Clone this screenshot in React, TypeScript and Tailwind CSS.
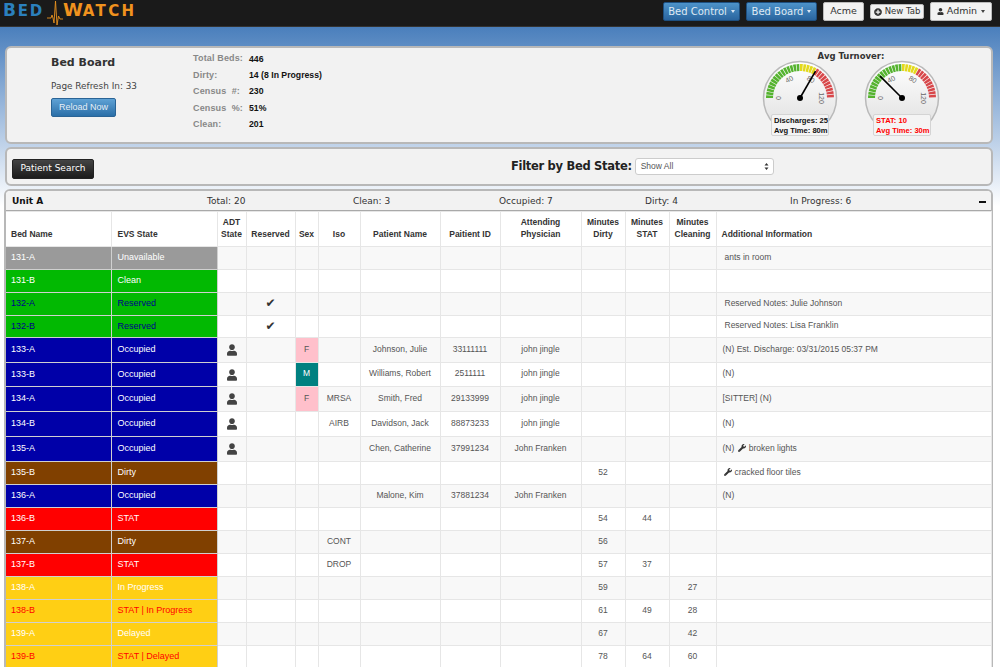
import React from "react";
import { FaUser, FaPlusCircle, FaWrench } from "react-icons/fa";

type Row = {
    bed: string;
    evs: string;
    color: string;
    text: string;
    h: string;
    adt?: boolean;
    reserved?: boolean;
    sex?: string;
    iso?: string;
    name?: string;
    pid?: string;
    doctor?: string;
    dirty?: string;
    stat?: string;
    cleaning?: string;
    info?: string;
    wrench?: boolean;
    infoPad?: string;
};

const rows: Row[] = [
    { bed: "131-A", evs: "Unavailable", color: "bg-[#9a9a9a]", text: "text-white", h: "h-[23px]", info: "ants in room", infoPad: "pl-[8px]" },
    { bed: "131-B", evs: "Clean", color: "bg-[#02b902]", text: "text-white", h: "h-[23px]" },
    { bed: "132-A", evs: "Reserved", color: "bg-[#02b902]", text: "text-[#00008b]", h: "h-[23px]", reserved: true, info: "Reserved Notes: Julie Johnson", infoPad: "pl-[8px]" },
    { bed: "132-B", evs: "Reserved", color: "bg-[#02b902]", text: "text-[#00008b]", h: "h-[22px]", reserved: true, info: "Reserved Notes: Lisa Franklin", infoPad: "pl-[8px]" },
    { bed: "133-A", evs: "Occupied", color: "bg-[#0000a8]", text: "text-white", h: "h-[25px]", adt: true, sex: "F", name: "Johnson, Julie", pid: "33111111", doctor: "john jingle", info: "(N) Est. Discharge: 03/31/2015 05:37 PM" },
    { bed: "133-B", evs: "Occupied", color: "bg-[#0000a8]", text: "text-white", h: "h-[24px]", adt: true, sex: "M", name: "Williams, Robert", pid: "2511111", doctor: "john jingle", info: "(N)" },
    { bed: "134-A", evs: "Occupied", color: "bg-[#0000a8]", text: "text-white", h: "h-[25px]", adt: true, sex: "F", iso: "MRSA", name: "Smith, Fred", pid: "29133999", doctor: "john jingle", info: "[SITTER] (N)" },
    { bed: "134-B", evs: "Occupied", color: "bg-[#0000a8]", text: "text-white", h: "h-[25px]", adt: true, iso: "AIRB", name: "Davidson, Jack", pid: "88873233", doctor: "john jingle", info: "(N)" },
    { bed: "135-A", evs: "Occupied", color: "bg-[#0000a8]", text: "text-white", h: "h-[25px]", adt: true, name: "Chen, Catherine", pid: "37991234", doctor: "John Franken", info: "(N)", wrench: true },
    { bed: "135-B", evs: "Dirty", color: "bg-[#804000]", text: "text-white", h: "h-[23px]", dirty: "52", wrench: true, info: "cracked floor tiles" },
    { bed: "136-A", evs: "Occupied", color: "bg-[#0000a8]", text: "text-white", h: "h-[23px]", name: "Malone, Kim", pid: "37881234", doctor: "John Franken", info: "(N)" },
    { bed: "136-B", evs: "STAT", color: "bg-[#ff0000]", text: "text-white", h: "h-[23px]", dirty: "54", stat: "44" },
    { bed: "137-A", evs: "Dirty", color: "bg-[#804000]", text: "text-white", h: "h-[23px]", iso: "CONT", dirty: "56" },
    { bed: "137-B", evs: "STAT", color: "bg-[#ff0000]", text: "text-white", h: "h-[23px]", iso: "DROP", dirty: "57", stat: "37" },
    { bed: "138-A", evs: "In Progress", color: "bg-[#ffcf14]", text: "text-white", h: "h-[23px]", dirty: "59", cleaning: "27" },
    { bed: "138-B", evs: "STAT | In Progress", color: "bg-[#ffcf14]", text: "text-[#ff0000]", h: "h-[23px]", dirty: "61", stat: "49", cleaning: "28" },
    { bed: "139-A", evs: "Delayed", color: "bg-[#ffcf14]", text: "text-white", h: "h-[23px]", dirty: "67", cleaning: "42" },
    { bed: "139-B", evs: "STAT | Delayed", color: "bg-[#ffcf14]", text: "text-[#ff0000]", h: "h-[23px]", dirty: "78", stat: "64", cleaning: "60" },
];

const stats = [
    ["Total Beds:", "446"],
    ["Dirty:", "14 (8 In Progress)"],
    ["Census  #:", "230"],
    ["Census  %:", "51%"],
    ["Clean:", "201"],
];

const Caret = ({ white }: { white?: boolean }) => (
    <span className={`inline-block ml-[4px] align-middle w-0 h-0 border-x-[2.5px] border-x-transparent border-t-[3px] ${white ? "border-t-[#dbe7f3]" : "border-t-[#444]"}`} />
);

const NavBlue = ({ label, width }: { label: string; width: string }) => (
    <div className={`${width} h-[19px] flex items-center justify-center rounded-[2px] text-[10px] text-[#dfe9f3] bg-gradient-to-b from-[#4d93c9] to-[#2a659f] border border-[#1d4f80] font-['DejaVu_Sans',sans-serif]`}>
        {label}
        <Caret white />
    </div>
);

// value goes 0..120 over the half circle
const Gauge = ({ id, value, lines, red }: { id: string; value: number; lines: string[]; red?: boolean }) => {
    const cx = 42;
    const cy = 40;
    const ticks = [];
    for (let i = 0; i < 30; i++) {
        const a0 = Math.PI - (i / 30) * Math.PI;
        const a1 = Math.PI - ((i + 0.8) / 30) * Math.PI;
        const color = i < 15 ? "#55b32f" : i < 20 ? "#e3d91c" : "#d8474a";
        const p = (r: number, a: number) => `${cx + r * Math.cos(a)} ${cy - r * Math.sin(a)}`;
        ticks.push(
            <path key={i} fill={color} d={`M${p(27, a0)} L${p(34, a0)} L${p(34, a1)} L${p(27, a1)} Z`} />
        );
    }
    const needle = Math.PI - (value / 120) * Math.PI;
    return (
        <div className="relative w-[84px] h-[80px]">
            <svg width="84" height="80" viewBox="0 0 84 80">
                <defs>
                    <linearGradient id={id} x1="0" y1="0" x2="0" y2="1">
                        <stop offset="0" stopColor="#ffffff" />
                        <stop offset="1" stopColor="#dedede" />
                    </linearGradient>
                </defs>
                <circle cx={cx} cy={cy} r="36.5" fill={`url(#${id})`} stroke="#b9b9b9" strokeWidth="1.5" />
                {ticks}
                {[0, 40, 80, 120].map((v) => (
                    <text
                        key={v}
                        x={cx}
                        y={cy - 21}
                        fontSize="7"
                        fill="#666"
                        textAnchor="middle"
                        dominantBaseline="middle"
                        fontFamily="'Liberation Sans', sans-serif"
                        transform={`rotate(${-90 + v * 1.5} ${cx} ${cy})`}
                    >
                        {v}
                    </text>
                ))}
                <line
                    x1={cx}
                    y1={cy}
                    x2={cx + 31 * Math.cos(needle)}
                    y2={cy - 31 * Math.sin(needle)}
                    stroke="#000"
                    strokeWidth="1.6"
                />
                <circle cx={cx} cy={cy} r="3" fill="#000" />
            </svg>
            <div className={`absolute left-[13px] top-[56px] w-[58px] h-[22px] pl-[2px] pt-[1px] flex flex-col justify-center rounded-[2px] border border-[#d4d4d4] bg-[#f4f4f4] text-[7.6px] leading-[9.5px] font-bold whitespace-nowrap ${red ? "text-[#ff0000]" : "text-[#111]"}`}>
                {lines.map((l) => (
                    <div key={l}>{l}</div>
                ))}
            </div>
        </div>
    );
};

const th = "border border-[#e6e6e6] px-[1px] pb-[6px] align-bottom text-center font-bold text-[8.5px] leading-[12px] text-[#333]";

const App = () => {
    return (
        <div className="h-[667px] overflow-hidden bg-white font-['Liberation_Sans',sans-serif]">
            <div className="h-[27px] bg-[#1a1a1a] border-b border-[#333] flex items-start pr-[8px]">
                <div className="flex items-center h-[20px] pl-[3px] font-['DejaVu_Sans',sans-serif] font-bold leading-[20px]">
                    <span className="text-[#2b80bd] text-[15px] tracking-[1.8px] w-[44px] whitespace-nowrap">
                        <span className="text-[17px]">B</span>ED
                    </span>
                    <svg width="16" height="26" viewBox="0 0 16 26" className="self-start">
                        <path d="M0 18 H4 L5 15 L6 18 L7 23 L8.5 1 L10 25 L11.5 16 L13 19 H16" fill="none" stroke="#e8921f" strokeWidth="0.9" />
                    </svg>
                    <span className="text-[#f0921e] text-[15px] tracking-[2.3px] whitespace-nowrap">
                        <span className="text-[18px] tracking-[0px]">W</span>ATCH
                    </span>
                </div>
                <div className="ml-auto flex items-center gap-[6px] pt-[2px] font-['DejaVu_Sans',sans-serif]">
                    <NavBlue label="Bed Control" width="w-[77px]" />
                    <NavBlue label="Bed Board" width="w-[71px]" />
                    <div className="w-[41px] h-[19px] flex items-center justify-center rounded-[2px] bg-[#f2f2f2] border border-[#bbb] text-[9.5px] text-[#333]">Acme</div>
                    <div className="w-[54px] h-[15px] flex items-center justify-center gap-[3px] rounded-[2px] bg-[#f2f2f2] border border-[#bbb] text-[8.5px] text-[#333]">
                        <FaPlusCircle className="w-[8px] h-[8px]" />
                        New Tab
                    </div>
                    <div className="w-[62px] h-[19px] flex items-center justify-center rounded-[2px] bg-[#f2f2f2] border border-[#bbb] text-[9.5px] text-[#333]">
                        <FaUser className="w-[7px] h-[7px] mr-[3px]" />
                        Admin
                        <Caret />
                    </div>
                </div>
            </div>

            <div className="h-[640px] pt-[19px] pl-[5px] pr-[7px] bg-gradient-to-b from-[#4a7fbc] to-white to-[28%]">
                <div className="h-[98px] flex rounded-[6px] border-2 border-[#b8b8b8] bg-[#f2f2f2] pl-[44px]">
                    <div className="w-[142px] pt-[8px] font-['DejaVu_Sans',sans-serif]">
                        <div className="text-[11px] font-bold text-[#333] leading-[14px]">Bed Board</div>
                        <div className="mt-[11px] text-[8.9px] leading-[11px] text-[#444] whitespace-nowrap">Page Refresh In: 33</div>
                        <div className="mt-[6px] w-[65px] h-[19px] flex items-center justify-center rounded-[2px] border border-[#2a6496] bg-gradient-to-b from-[#5fa2d5] to-[#2a6fa8] text-[9px] text-[#e6eef6] font-['Liberation_Sans',sans-serif]">
                            Reload Now
                        </div>
                    </div>
                    <div className="pt-[3px] flex flex-col">
                        {stats.map(([k, v]) => (
                            <div key={k} className="flex h-[16.4px] items-center text-[9px] font-bold">
                                <span className="w-[56px] text-[#888] whitespace-pre tracking-[0.15px]">{k}</span>
                                <span className="text-[8.7px] text-[#111] whitespace-nowrap">{v}</span>
                            </div>
                        ))}
                    </div>
                    <div className="ml-auto mr-[47px] pt-[3px] flex flex-col items-center">
                        <div className="h-[11px] text-[8.5px] leading-[11px] font-bold text-[#333] font-['DejaVu_Sans',sans-serif]">Avg Turnover:</div>
                        <div className="flex gap-[18px] -mt-[4px]">
                            <Gauge id="g1" value={80} lines={["Discharges: 25", "Avg Time: 80m"]} />
                            <Gauge id="g2" value={30} lines={["STAT: 10", "Avg Time: 30m"]} red />
                        </div>
                    </div>
                </div>

                <div className="mt-[3px] h-[39px] flex items-center rounded-[6px] border-2 border-[#b8b8b8] bg-[#f2f2f2] pl-[5px]">
                    <div className="mt-[5px] w-[82px] h-[20px] flex items-center justify-center rounded-[2px] bg-gradient-to-b from-[#444] to-[#1c1c1c] border border-[#222] text-white text-[9px] font-['DejaVu_Sans',sans-serif]">
                        Patient Search
                    </div>
                    <div className="ml-[417px] text-[11.5px] font-bold text-[#222] whitespace-nowrap font-['DejaVu_Sans',sans-serif] tracking-[-0.3px]">Filter by Bed State:</div>
                    <div className="ml-[3px] w-[139px] h-[17px] flex items-center justify-between rounded-[3px] border border-[#ccc] bg-white pl-[5px] pr-[4px] text-[8.5px] text-[#555]">
                        Show All
                        <svg width="5" height="9" viewBox="0 0 5 9">
                            <path d="M0.5 3.5 L2.5 1 L4.5 3.5 Z M0.5 5.5 L2.5 8 L4.5 5.5 Z" fill="#333" />
                        </svg>
                    </div>
                </div>

                <div className="mt-[3px] -ml-[1px] rounded-t-[6px] border-2 border-b-0 border-[#b8b8b8] bg-white">
                    <div className="h-[20px] pt-[2px] flex items-center bg-[#f2f2f2] border-b border-[#a9a9a9] rounded-t-[4px] pl-[6px] font-['DejaVu_Sans',sans-serif] text-[9px] text-[#333]">
                        <div className="w-[195px] text-[9px] font-bold text-[#111]">Unit A</div>
                        <div className="w-[146px]">Total: 20</div>
                        <div className="w-[146px]">Clean: 3</div>
                        <div className="w-[146px]">Occupied: 7</div>
                        <div className="w-[145px]">Dirty: 4</div>
                        <div className="w-[62px] whitespace-nowrap">In Progress: 6</div>
                        <div className="ml-[127px] w-[7px] h-[2px] bg-[#111]" />
                    </div>
                    <table className="w-[985px] table-fixed border-collapse text-[8.5px] text-[#555]">
                        <colgroup>
                            <col className="w-[105px]" />
                            <col className="w-[106px]" />
                            <col className="w-[29px]" />
                            <col className="w-[49px]" />
                            <col className="w-[23px]" />
                            <col className="w-[42px]" />
                            <col className="w-[80px]" />
                            <col className="w-[60px]" />
                            <col className="w-[81px]" />
                            <col className="w-[44px]" />
                            <col className="w-[44px]" />
                            <col className="w-[47px]" />
                            <col className="w-[275px]" />
                        </colgroup>
                        <thead>
                            <tr className="h-[35px]">
                                <th className={`${th} text-left pl-[5px] border-l-0`}>Bed Name</th>
                                <th className={`${th} text-left pl-[6px]`}>EVS State</th>
                                <th className={th}>ADT<br />State</th>
                                <th className={th}>Reserved</th>
                                <th className={th}>Sex</th>
                                <th className={th}>Iso</th>
                                <th className={th}>Patient Name</th>
                                <th className={th}>Paitient ID</th>
                                <th className={th}>Attending<br />Physician</th>
                                <th className={th}>Minutes<br />Dirty</th>
                                <th className={th}>Minutes<br />STAT</th>
                                <th className={th}>Minutes<br />Cleaning</th>
                                <th className={`${th} text-left pl-[5px]`}>Additional Information</th>
                            </tr>
                        </thead>
                        <tbody>
                            {rows.map((r, i) => {
                                const bg = i % 2 === 0 ? "bg-[#f8f8f8]" : "bg-white";
                                const td = `border border-[#e6e6e6] text-center px-0 pt-0 pb-[2px] ${bg}`;
                                return (
                                    <tr key={r.bed} className={r.h}>
                                        <td className={`${r.color} ${r.text} border border-[#d0d0d0] border-l-0 pl-[5px] text-[9px]`}>{r.bed}</td>
                                        <td className={`${r.color} ${r.text} border border-[#d0d0d0] pl-[6px] text-[9px] whitespace-nowrap`}>{r.evs}</td>
                                        <td className={`border border-[#e6e6e6] p-0 ${bg}`}>
                                            {r.adt && <FaUser className="w-[10px] h-[12px] mx-auto text-[#444]" />}
                                        </td>
                                        <td className={`${td} text-[12px] text-[#333] font-['DejaVu_Sans',sans-serif]`}>{r.reserved && "✔"}</td>
                                        <td className={`border border-[#e6e6e6] text-center px-0 pt-0 pb-[2px] ${r.sex === "F" ? "bg-[#ffc0cb] text-[#555]" : r.sex === "M" ? "bg-[#008080] text-white" : bg}`}>{r.sex}</td>
                                        <td className={td}>{r.iso}</td>
                                        <td className={`${td} whitespace-nowrap`}>{r.name}</td>
                                        <td className={td}>{r.pid}</td>
                                        <td className={td}>{r.doctor}</td>
                                        <td className={td}>{r.dirty}</td>
                                        <td className={td}>{r.stat}</td>
                                        <td className={td}>{r.cleaning}</td>
                                        <td className={`border border-[#e6e6e6] pr-0 pt-0 pb-[2px] whitespace-nowrap ${bg} ${r.infoPad ?? "pl-[6px]"}`}>
                                            {r.bed === "135-A" && "(N) "}
                                            {r.wrench && <FaWrench className="inline w-[8px] h-[8px] text-[#333] mr-[3px] ml-[1px]" />}
                                            {r.bed === "135-A" ? "broken lights" : r.info}
                                        </td>
                                    </tr>
                                );
                            })}
                        </tbody>
                    </table>
                </div>
            </div>
        </div>
    );
};

export default App;
